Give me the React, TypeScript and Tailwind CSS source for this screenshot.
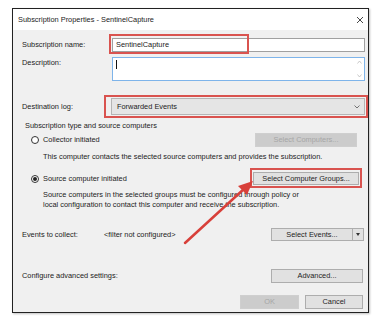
import React from "react";

const Btn = ({ children, w, disabled }: { children: React.ReactNode; w: number; disabled?: boolean }) => (
  <div
    className={`h-full flex items-center justify-center border ${disabled ? "border-[#cfcfcf] bg-[#cccccc] text-[#a6a6a6]" : "border-[#adadad] bg-[#e1e1e1] text-[#1e1e1e]"}`}
    style={{ width: w }}
  >
    {children}
  </div>
);

const Radio = ({ checked }: { checked?: boolean }) => (
  <div className="w-[8px] h-[8px] rounded-full border border-[#333] bg-white flex items-center justify-center">
    {checked && <div className="w-[4px] h-[4px] rounded-full bg-[#222]" />}
  </div>
);

export default function App() {
  return (
    <div
      className="w-[386px] h-[319px] bg-white pl-[12px] pt-[8px]"
      style={{ fontFamily: '"Liberation Sans", Arial, sans-serif' }}
    >
      <div className="relative w-[357px] h-[305px] border border-[#222] bg-[#f0f0f0] flex flex-col text-[7.4px] leading-[10px] text-[#222] shadow-[1px_1px_2px_rgba(0,0,0,0.25)]">
        {/* title bar */}
        <div className="h-[21px] bg-white flex items-center justify-between pl-[5px] pr-[4px]">
          <span>Subscription Properties - SentinelCapture</span>
          <svg width="8" height="8" viewBox="0 0 8 8">
            <path d="M1 1 L7 7 M7 1 L1 7" stroke="#333" strokeWidth="0.9" />
          </svg>
        </div>

        {/* subscription name */}
        <div className="mt-[8px] h-[14px] flex items-center pl-[9px] pr-[3px]">
          <span className="w-[90px]">Subscription name:</span>
          <div className="flex-1 h-full border border-[#a0a0a0] bg-white flex items-center pl-[3px]">SentinelCapture</div>
        </div>

        {/* description */}
        <div className="mt-[5px] h-[24px] flex items-start pl-[9px] pr-[3px]">
          <span className="w-[90px] pt-[1px]">Description:</span>
          <div className="flex-1 h-full border border-[#7eb4ea] bg-white flex justify-between pl-[3px] pt-[2px] pr-[2px]">
            <div className="w-[1px] h-[9px] bg-[#111]" />
            <div className="flex flex-col justify-between h-[18px]">
              <svg width="5" height="4" viewBox="0 0 5 4"><path d="M0.5 3.5 L2.5 1 L4.5 3.5" stroke="#bdbdbd" fill="none" strokeWidth="0.8" /></svg>
              <svg width="5" height="4" viewBox="0 0 5 4"><path d="M0.5 0.5 L2.5 3 L4.5 0.5" stroke="#bdbdbd" fill="none" strokeWidth="0.8" /></svg>
            </div>
          </div>
        </div>

        {/* destination log */}
        <div className="mt-[17px] h-[17px] flex items-center pl-[9px] pr-[3px]">
          <span className="w-[89px]">Destination log:</span>
          <div className="flex-1 h-full border border-[#b5b5b5] bg-[#e5e5e5] flex items-center justify-between pl-[5px] pr-[4px]">
            <span>Forwarded Events</span>
            <svg width="6" height="4" viewBox="0 0 6 4"><path d="M0.5 0.5 L3 3 L5.5 0.5" stroke="#555" fill="none" strokeWidth="0.8" /></svg>
          </div>
        </div>

        {/* group label */}
        <div className="mt-[6px] h-[10px] pl-[12px]">Subscription type and source computers</div>

        {/* collector initiated */}
        <div className="mt-[2px] h-[14px] flex items-center pl-[18px] pr-[11px]">
          <Radio />
          <span className="ml-[4px] flex-1">Collector initiated</span>
          <Btn w={102} disabled>Select Computers...</Btn>
        </div>
        <div className="mt-[5px] h-[10px] pl-[30px]">This computer contacts the selected source computers and provides the subscription.</div>

        {/* source initiated */}
        <div className="mt-[10px] h-[13px] flex items-center pl-[18px] pr-[9px]">
          <Radio checked />
          <span className="ml-[4px] flex-1">Source computer initiated</span>
          <Btn w={106}>Select Computer Groups...</Btn>
        </div>
        <div className="mt-[5px] pl-[30px]">
          <div className="h-[10px]">Source computers in the selected groups must be configured through policy or</div>
          <div className="h-[10px]">local configuration to contact this computer and receive the subscription.</div>
        </div>

        {/* events */}
        <div className="mt-[18px] h-[13px] flex items-center pl-[9px] pr-[4px]">
          <span className="w-[82px]">Events to collect:</span>
          <span className="flex-1">&lt;filter not configured&gt;</span>
          <div className="h-full w-[93px] border border-[#adadad] bg-[#e1e1e1] flex">
            <div className="flex-1 flex items-center justify-center border-r border-[#adadad]">Select Events...</div>
            <div className="w-[10px] flex items-center justify-center">
              <svg width="4" height="3" viewBox="0 0 4 3"><path d="M0 0 L4 0 L2 3 Z" fill="#333" /></svg>
            </div>
          </div>
        </div>

        {/* advanced */}
        <div className="mt-[28px] h-[14px] flex items-center pl-[9px] pr-[5px]">
          <span className="flex-1">Configure advanced settings:</span>
          <Btn w={92}>Advanced...</Btn>
        </div>

        {/* ok cancel */}
        <div className="mt-[12px] h-[14px] flex items-center justify-end gap-[6px] pr-[5px]">
          <Btn w={59} disabled>OK</Btn>
          <Btn w={58}>Cancel</Btn>
        </div>

        {/* annotations */}
        <div className="absolute left-[96px] top-[25px] w-[140px] h-[20px] border-2 border-[#d9534f]" />
        <div className="absolute left-[91px] top-[86px] w-[264px] h-[23px] border-2 border-[#d9534f]" />
        <div className="absolute left-[237px] top-[159px] w-[112px] h-[20px] border-2 border-[#d9534f]" />
        <svg className="absolute left-0 top-0 pointer-events-none" width="357" height="305" viewBox="0 0 357 305">
          <path d="M172 234 L232 179" stroke="#d8403a" strokeWidth="2.5" strokeLinecap="round" />
          <path d="M240 172 L225 177 L234 186 Z" fill="#d8403a" />
        </svg>
      </div>
    </div>
  );
}
